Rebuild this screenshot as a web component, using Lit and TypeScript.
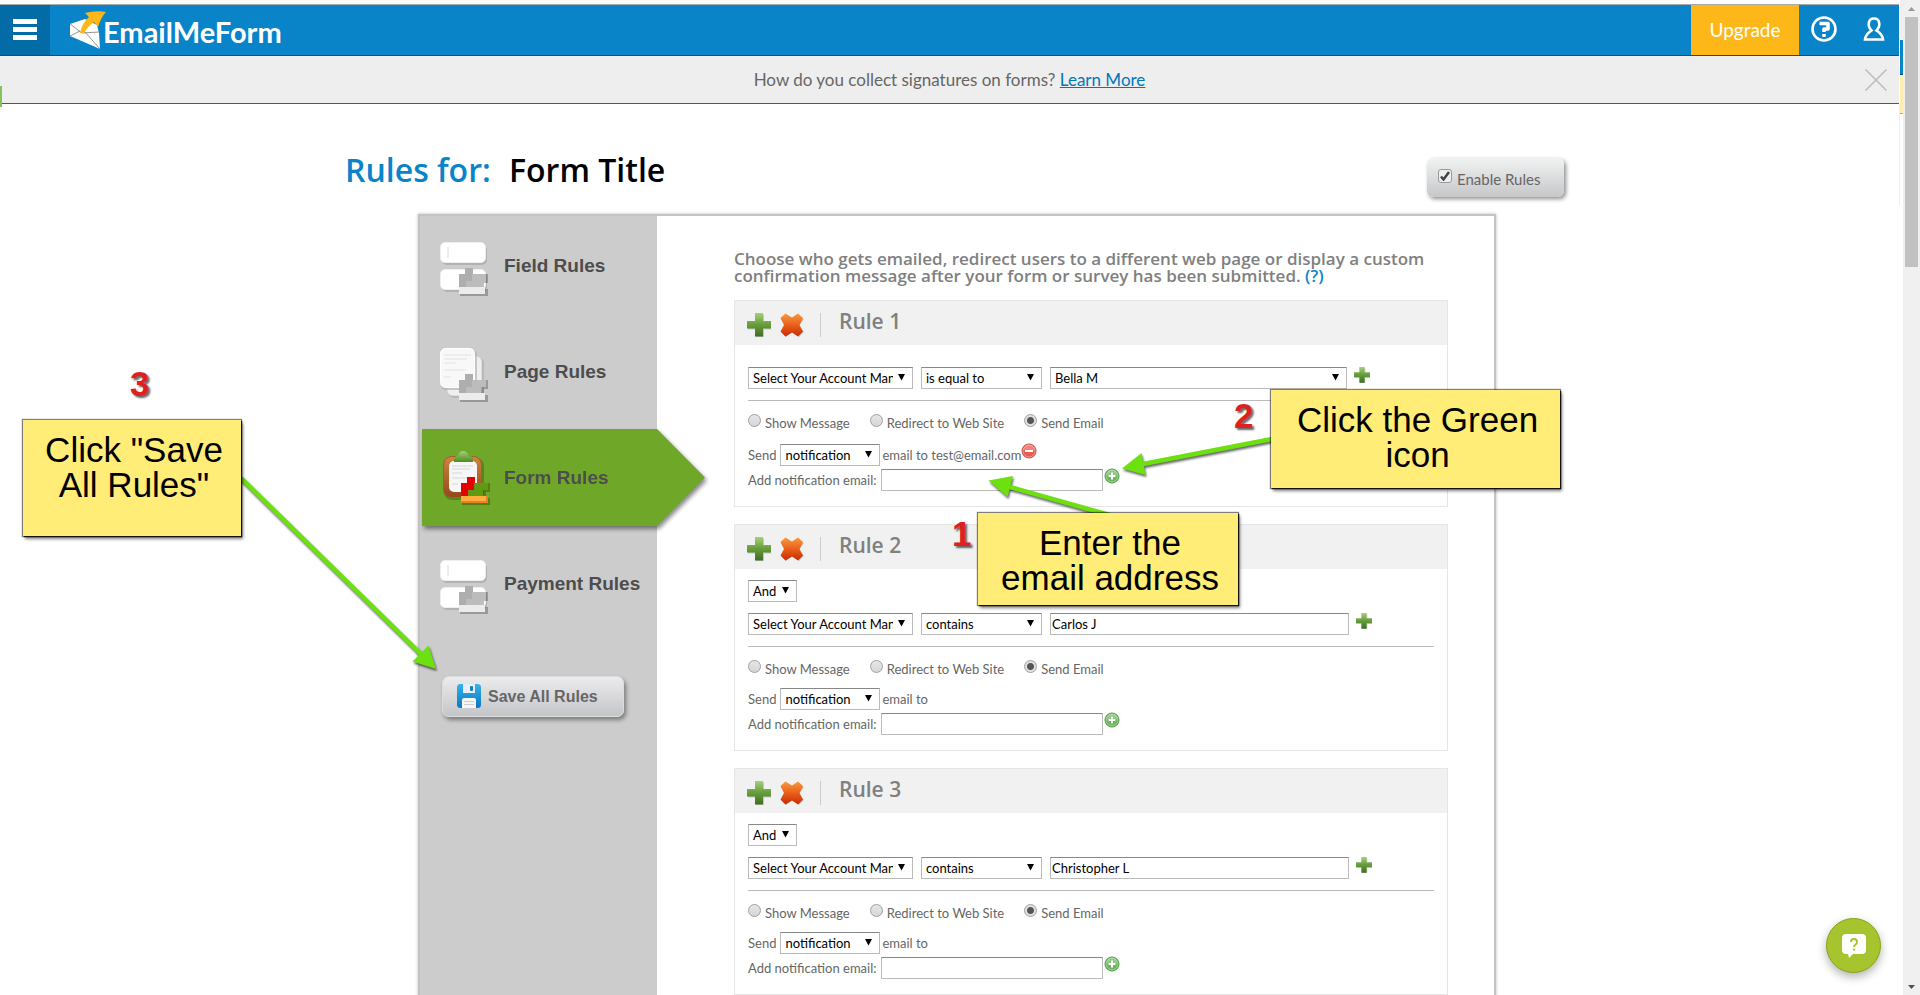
import { LitElement, html, css, svg, nothing } from "lit";
import { customElement, property } from "lit/decorators.js";

const plusShape = (size: number) => html`<svg width=${size} height=${size} viewBox="0 0 24 24" aria-hidden="true">
  <defs><linearGradient id="plusFill" x1="0" y1="0" x2="0" y2="1">
    <stop offset="0" stop-color="#a6cf7e"/><stop offset=".45" stop-color="#6ba23e"/><stop offset="1" stop-color="#3f6d25"/>
  </linearGradient></defs>
  <path d="M9 1.500h8v8h8v7h-8v8h-8v-8h-8v-7h8z" fill="#000" opacity=".18"/>
  <path d="M8 0h8v8h8v7.500h-8v8h-8v-8h-8v-7.500h8z" fill="url(#plusFill)"/>
</svg>`;

const crossShape = html`<svg width="24" height="24" viewBox="0 0 24 24" aria-hidden="true">
  <defs><linearGradient id="crossFill" x1="0" y1="0" x2="0" y2="1">
    <stop offset="0" stop-color="#f79a3c"/><stop offset=".5" stop-color="#e8601c"/><stop offset="1" stop-color="#c92a00"/>
  </linearGradient></defs>
  <path d="M6 1.500l7 5 6-5 5 5-5 6.500 5 6-5 5-6-5-7 5-5-5 5-6-5-6.500z" fill="#000" opacity=".18"/>
  <path d="M5.500.500L12 4.500 18 .500 23 5 19.500 12 23 18.500 18 23.500 12 19.500 5.500 23.500.500 18.500 4 12 .500 5z" fill="url(#crossFill)"/>
</svg>`;

const roundBadge = (add: boolean) => html`<svg width="16" height="16" viewBox="0 0 16 16" aria-hidden="true">
  <circle cx="8" cy="8" r="7" fill=${add ? "#6cb85c" : "#e85b52"} stroke=${add ? "#4b9446" : "#c24a44"}/>
  <path d="M2.500 7a5.500 5.500 0 0 1 11 0q-5.500 2-11 0z" fill="#fff" opacity=".25"/>
  <circle cx="8" cy="8" r="6" fill="none" stroke="#fff" stroke-opacity=".35"/>
  <path d=${add ? "M7 4.500h2V7h2.500v2H9v2.500H7V9H4.500V7H7z" : "M4 7h8v2H4z"} fill="#fff"/>
</svg>`;

const blocks = (a: string, b: string, base: string) => svg`
  <path d="M20 47h28v7H20z" fill="#000" opacity=".25"/>
  <path d="M19 32h6v-6h8v14h-7v6h-7z" fill=${a}/>
  <path d="M32 32h14v7h-5v7H26v-7h6z" fill=${b}/>
  <path d="M41 39h5v-7h2v9h-4v5h-3z" fill="#000" opacity=".25"/>
  <path d="M19 45h26v7H19z" fill=${base}/>`;

const fieldIcon = html`<svg width="50" height="56" viewBox="0 0 50 56" aria-hidden="true">
  <g fill="#999" opacity=".5"><rect x="2" y="3" width="45" height="20" rx="5"/><rect x="2" y="30" width="45" height="20" rx="5"/></g>
  <rect x="0.500" y=".500" width="45" height="20" rx="4.500" fill="#fff" stroke="#eee"/>
  <path d="M8 5v11" stroke="#ececec" stroke-width="2"/>
  <rect x=".500" y="27.500" width="45" height="20" rx="4.500" fill="#fff" stroke="#eee"/>
  ${blocks("#aeaeae", "#bcbcbc", "#ececec")}
</svg>`;

const pageIcon = html`<svg width="50" height="56" viewBox="0 0 50 56" aria-hidden="true">
  <rect x="9" y="10" width="35" height="40" rx="5" fill="#aaa" opacity=".6"/>
  <rect x="7.500" y="8.500" width="34" height="39" rx="5" fill="#efefef" stroke="#ddd"/>
  <rect x="1" y="2" width="36" height="40" rx="5" fill="#aaa" opacity=".6"/>
  <rect x=".500" y=".500" width="34" height="39" rx="5" fill="#f8f8f8" stroke="#fff"/>
  <path d="M4 7h27M4 11h23M4 15h12M4 22h22M4 29h7" stroke="#e2e2e2"/>
  ${blocks("#aeaeae", "#bcbcbc", "#ececec")}
</svg>`;

const formIcon = html`<svg width="50" height="56" viewBox="0 0 50 56" aria-hidden="true">
  <defs><linearGradient id="wood" x1="0" y1="0" x2="0" y2="1"><stop offset="0" stop-color="#cf8440"/><stop offset="1" stop-color="#93481b"/></linearGradient>
  <linearGradient id="clip" x1="0" y1="0" x2="0" y2="1"><stop offset="0" stop-color="#a5cf78"/><stop offset="1" stop-color="#4d8c1e"/></linearGradient></defs>
  <rect x="4" y="7" width="40" height="42" rx="8" fill="#3e6614" opacity=".5"/>
  <rect x="3.500" y="5.500" width="38" height="41" rx="8" fill="url(#wood)" stroke="#a65d28"/>
  <rect x="9" y="10" width="28" height="31" rx="5" fill="#f6f6f6"/>
  <path d="M12 15h21M12 18h18M12 22h10M12 27h19M12 33h6" stroke="#d6d6d6"/>
  <path d="M14 11V8q0-3 4-3 1-5 5-5t6 5q4 0 4 4v2z" fill="url(#clip)"/>
  <g transform="translate(2 0)">${blocks("#e60000", "#5f9a12", "#fdae3c")}<path d="M19 51h26M45 45v7" stroke="#ef7d22" stroke-width="2" fill="none"/></g>
</svg>`;

const NAV = [
  { label: "Field Rules", icon: fieldIcon },
  { label: "Page Rules", icon: pageIcon },
  { label: "Form Rules", icon: formIcon },
  { label: "Payment Rules", icon: fieldIcon },
];

interface Rule { title: string; join?: string; op: string; value: string; recipient?: string; }

const RULES: Rule[] = [
  { title: "Rule 1", op: "is equal to", value: "Bella M", recipient: "test@email.com" },
  { title: "Rule 2", join: "And", op: "contains", value: "Carlos J" },
  { title: "Rule 3", join: "And", op: "contains", value: "Christopher L" },
];

const controls = css`
  * { box-sizing: border-box; }
  button { border: 0; padding: 0; background: none; font: inherit; color: inherit; cursor: pointer; }
  svg { display: block; flex: none; }
`;

@customElement("rule-card")
class RuleCard extends LitElement {
  @property({ attribute: false }) rule!: Rule;

  static styles = [controls, css`
    :host { display: block; border: 1px solid #e5e5e5; background: #fff; font: 13px/16px Lato, sans-serif; color: #666; }
    .head { display: flex; align-items: center; height: 44px; padding: 4px 12px 0; background: #f1f1f1; }
    .head button + button { margin-left: 9px; }
    h2 { margin: 0 0 0 16px; padding-left: 18px; border-left: 1px solid #ccc; font: 600 21px/24px "Open Sans", sans-serif; color: #808080; }
    h2 span { display: block; margin-top: -4px; padding-bottom: 4px; }
    .body { padding: 11px 13px 15px; }
    .body.single { padding-top: 22px; }
    .row { display: flex; align-items: center; }
    .join { margin-bottom: 11px; }
    .cond { gap: 8px; padding-bottom: 11px; border-bottom: 1px solid #bbb; }
    .cond button { align-self: flex-start; margin-left: -1px; }
    .pick { position: relative; display: block; }
    .pick svg { position: absolute; right: 8px; top: 7px; pointer-events: none; }
    select, .text { display: block; width: 100%; height: 22px; margin: 0; border: 1px solid #bbb; border-top-color: #888; border-radius: 0; background: #fff; appearance: none; font: 13px/18px Lato, sans-serif; color: #000; outline: 0; }
    select { padding: 0 19px 0 4px; text-overflow: clip; }
    .text { padding: 0 1px; }
    .and { width: 49px; }
    .field { width: 165px; }
    .op { width: 121px; }
    .value { width: 297px; }
    .value.free { width: 299px; }
    .kind { width: 100px; }
    .radios { padding: 11px 0; gap: 20px; }
    .radios label { display: flex; gap: 4px; }
    .radios input { appearance: none; width: 13px; height: 13px; margin: 2px 0 0; border: 1px solid #a0a0a0; border-radius: 50%; background: linear-gradient(#e6e6e6, #d6d6d6); }
    .radios input:checked { background: radial-gradient(circle, #555 0 3px, #e0e0e0 4px); }
    .radios span { margin-top: 3px; }
    .send { gap: 4px; height: 22px; margin-bottom: 3px; }
    .send .to { margin-left: -2px; display: flex; height: 16px; }
    .send .to button { align-self: flex-start; margin-top: -4px; }
    .single .send { margin-top: 2px; }
    .add { gap: 4px; height: 22px; }
    .add .text { width: 222px; }
    .add button { margin: -8px 0 0 -3px; }
  `];

  private pick(cls: string, name: string, text: string) {
    return html`<span class="pick ${cls}"><select aria-label=${name}><option>${text}</option></select>
      <svg width="7" height="7" viewBox="0 0 7 7" aria-hidden="true"><path d="M0 0h7L3.500 6.500z" fill="#000"/></svg></span>`;
  }

  render() {
    const r = this.rule;
    return html`
      <div class="head">
        <button aria-label="Add rule">${plusShape(24)}</button>
        <button aria-label="Delete rule">${crossShape}</button>
        <h2><span>${r.title}</span></h2>
      </div>
      <div class="body ${r.join ? "" : "single"}">
        ${r.join ? html`<div class="row join">${this.pick("and", "Join", r.join)}</div>` : nothing}
        <div class="row cond">
          ${this.pick("field", "Field", "Select Your Account Manager")}
          ${this.pick("op", "Operator", r.op)}
          ${r.join
            ? html`<span class="value free"><input class="text" type="text" aria-label="Value" .value=${r.value}></span>`
            : this.pick("value", "Value", r.value)}
          <button aria-label="Add condition">${plusShape(16)}</button>
        </div>
        <div class="row radios">
          ${["Show Message", "Redirect to Web Site", "Send Email"].map((t, i) => html`
            <label><input type="radio" name="action" ?checked=${i === 2}><span>${t}</span></label>`)}
        </div>
        <div class="row send">
          <span>Send</span>${this.pick("kind", "Email kind", "notification")}
          <span class="to">email to ${r.recipient ?? ""}${r.recipient ? html`<button aria-label="Remove recipient">${roundBadge(false)}</button>` : nothing}</span>
        </div>
        <div class="row add">
          <label for="mail">Add notification email:</label>
          <input class="text" id="mail" type="text">
          <button aria-label="Add email">${roundBadge(true)}</button>
        </div>
      </div>`;
  }
}

@customElement("app-root")
class AppRoot extends LitElement {
  static styles = [controls, css`
    :host { display: flex; position: relative; height: 100vh; overflow: hidden; background: #fff; font: 16px/20px Lato, sans-serif; color: #666; }
    .page { flex: 1; min-width: 0; }
    .top { padding-top: 4px; margin-right: 4px; }
    .bar { display: flex; align-items: stretch; height: 52px; border-top: 1px solid #aaa; border-bottom: 1px solid #0b4f80; background: #0984c9; color: #fff; }
    .menu { width: 50px; background: #036ba5; display: grid; place-items: center; padding-bottom: 2px; }
    .logo { display: flex; align-items: center; margin-left: 19px; color: #fff; text-decoration: none; font-size: 29px; font-weight: 700; line-height: 34px; }
    .logo svg { margin-right: -4px; }
    .logo span { padding-top: 3px; }
    .spacer { flex: 1; }
    .upgrade { width: 108px; background: #fdb718; font-size: 19px; }
    .tool { width: 50px; display: grid; place-items: center; padding-bottom: 2px; }
    .banner { display: flex; align-items: center; height: 48px; background: #eee; border-bottom: 1px solid #555; font-size: 17px; }
    .banner p { flex: 1; margin: 0; padding-left: 34px; text-align: center; color: #666; }
    .banner a { color: #0077be; }
    .close { margin-right: 12px; }
    .main { width: 1227px; max-width: 100%; margin: 0 auto; }
    .title { display: flex; justify-content: space-between; align-items: flex-start; padding: 44px 1px 0 7px; height: 110px; }
    h1 { margin: 0; font: 600 32px/44px "Open Sans", sans-serif; color: #000; }
    h1 em { font-style: normal; color: #0984c9; margin-right: 10px; }
    .enable { display: flex; align-items: center; gap: 5px; width: 137px; height: 39px; margin-top: 10px; padding-left: 11px; border-radius: 6px; background: linear-gradient(#f1f2f2, #c6c7c9); box-shadow: 2px 2px 4px rgba(0,0,0,.45); font-size: 15px; }
    .enable span { padding-top: 3px; }
    .enable .check { position: relative; height: 14px; margin-top: -4px; padding: 0; }
    .enable input { display: block; appearance: none; width: 14px; height: 14px; margin: 0; border: 1px solid #999; border-radius: 3px; background: #eee; }
    .check svg { position: absolute; left: 2px; top: 2px; pointer-events: none; }
    .panel { display: flex; margin: 0 69px 0 80px; min-height: 100vh; border: 2px solid #c3c3c3; box-shadow: 0 0 3px #bbb; }
    nav { width: 237px; flex: none; background: #ccc; display: flex; flex-direction: column; gap: 9px; padding-top: 1px; }
    nav a { display: flex; align-items: center; gap: 14px; height: 97px; padding-left: 18px; margin-left: 2px; text-decoration: none; color: #4d4d4d; font: 700 19px/24px "Liberation Sans", Arial, sans-serif; }
    nav a svg { margin-top: 8px; }
    .on { filter: drop-shadow(2px 3px 2px rgba(0,0,0,.45)); }
    .on a { width: 283px; background: #6fa728; clip-path: polygon(0 0, 235px 0, 100% 50%, 235px 100%, 0 100%); }
    .on a svg { margin-top: 3px; }
    .save { display: flex; align-items: center; gap: 6px; width: 182px; height: 41px; margin: 35px 0 0 22px; padding-left: 14px; border-radius: 7px; border: 1px solid #ddd; background: linear-gradient(#ececee, #c4c5c8); box-shadow: 2px 3px 4px rgba(0,0,0,.4); font: 700 16px/20px "Liberation Sans", Arial, sans-serif; color: #666; }
    .content { flex: 1; min-width: 0; padding: 34px 46px 0 77px; }
    .intro { margin: 0 0 16px; font: 600 17px/17px "Open Sans", sans-serif; color: #808080; }
    .intro a { color: #0984c9; text-decoration: none; }
    rule-card { margin-bottom: 17px; }
    .scroll { width: 17px; flex: none; display: flex; flex-direction: column; align-items: center; justify-content: space-between; background: #f0f0f0; padding: 7px 0 6px; }
    .thumb { width: 13px; height: 250px; background: #c1c1c1; margin-top: 6px; }
    .grow { flex: 1; }
    .edge { position: absolute; top: 0; right: 17px; width: 3px; }
    .edge i { display: block; }
    .e1 { height: 39px; background: #f0f0f0; }
    .e2 { height: 36px; background: #0984c9; border-top: 1px solid #fff; border-bottom: 1px solid #0b4f80; }
    .e3 { height: 39px; background: #ffeeb0; border-bottom: 1px solid #aaa; }
    .rule { position: absolute; top: 104px; right: 20px; width: 1px; height: 101px; background: #eee; }
    .tab { position: absolute; left: 0; top: 86px; width: 2px; height: 21px; background: #84c25c; }
    .arrows { position: absolute; left: 0; top: 0; filter: drop-shadow(1px 2px 1px rgba(0,0,0,.6)); pointer-events: none; }
    .note { position: absolute; padding: 12px 0 0 4px; background: #ffed78; box-shadow: 0 0 1px 1px rgba(0,0,0,.5), 1px 1px 1px #222, 2px 3px 3px rgba(0,0,0,.5); font: 35px/35px "Liberation Sans", Arial, sans-serif; color: #000; text-align: center; }
    .num { position: absolute; font: 700 35px/35px "Liberation Sans", Arial, sans-serif; color: #e02020; text-shadow: 2px 2px 2px rgba(0,0,0,.6); }
    .n1 { left: 978px; top: 513px; width: 260px; height: 92px; }
    .n2 { left: 1271px; top: 390px; width: 289px; height: 98px; }
    .n3 { left: 23px; top: 420px; width: 218px; height: 116px; }
    .d1 { left: 952px; top: 516px; }
    .d2 { left: 1234px; top: 398px; }
    .d3 { left: 130px; top: 366px; }
    .chat { position: absolute; right: 39px; bottom: 22px; width: 55px; height: 55px; border: 1px solid #86a516; border-radius: 50%; background: #a5c42e; box-shadow: 0 4px 10px rgba(0,0,0,.3); display: grid; place-items: center; }
  `];

  render() {
    return html`
      <div class="page">
        <header class="top">
          <div class="bar">
            <button class="menu" aria-label="Menu"><svg width="24" height="21" viewBox="0 0 24 21"><path d="M0 0h24v5H0zM0 8h24v5H0zM0 16h24v5H0z" fill="#fff"/></svg></button>
            <a class="logo" href="#">
              <svg width="38" height="40" viewBox="0 0 38 40" aria-hidden="true">
                <path d="M1 14L16 9l12 6 2 8 1 16L1 26z" fill="#fff"/>
                <path d="M1 14l12 9 17-1M1 26l10-5M16 22l15 17" fill="none" stroke="#777" stroke-width=".8"/>
                <path d="M11 23Q13 13 20 7l-4-4Q27 0 37 2q-5 5-8 15l-4-5q-6 4-10 11z" fill="#fdb718"/>
              </svg><span>EmailMeForm</span></a>
            <div class="spacer"></div>
            <button class="upgrade">Upgrade</button>
            <button class="tool" aria-label="Help"><svg width="26" height="26" viewBox="0 0 26 26"><circle cx="13" cy="13" r="11.500" fill="none" stroke="#fff" stroke-width="2.600"/><path d="M8.500 7.500h8.500v5.500h-4v3" fill="none" stroke="#fff" stroke-width="3.600" stroke-linejoin="round"/><path d="M11.200 18h3.600v3h-3.600z" fill="#fff"/></svg></button>
            <button class="tool" aria-label="Account"><svg width="22" height="26" viewBox="0 0 22 26"><path d="M8.500 14.500C4 10 5 2.500 11 2.500s7 7.500 2.500 12c3 2 6 3.500 6.500 9H2c.500-5.500 3.500-7 6.500-9z" fill="none" stroke="#fff" stroke-width="2.600"/></svg></button>
          </div>
          <div class="banner">
            <p>How do you collect signatures on forms? <a href="#">Learn More</a></p>
            <button class="close" aria-label="Close"><svg width="22" height="22" viewBox="0 0 22 22"><path d="M.500.500l21 21M21.500.500l-21 21" stroke="#bbb" stroke-width="1.500"/></svg></button>
          </div>
        </header>
        <main class="main">
          <div class="title">
            <h1><em>Rules for:</em> Form Title</h1>
            <label class="enable"><span class="check"><input type="checkbox" checked><svg width="10" height="10" viewBox="0 0 10 10"><path d="M1 5.500l2.500 3L9 1" fill="none" stroke="#444" stroke-width="2.500"/></svg></span><span>Enable Rules</span></label>
          </div>
          <div class="panel">
            <nav>
              ${NAV.map((n, i) => html`<div class=${i === 2 ? "on" : "off"}><a href="#">${n.icon}<span>${n.label}</span></a></div>`)}
              <button class="save"><svg width="25" height="25" viewBox="0 0 25 25"><defs><linearGradient id="disk" x1="0" y1="0" x2="0" y2="1"><stop offset="0" stop-color="#35b4e8"/><stop offset="1" stop-color="#0878c4"/></linearGradient></defs><rect width="24" height="24" rx="3.500" fill="url(#disk)"/><path d="M6 0h12v9H6z" fill="#e9eef2"/><rect x="13" y="2" width="3" height="5" rx="1" fill="#1580bb"/><path d="M5 24v-8q0-2 2-2h10q2 0 2 2v8z" fill="#f6f6f6"/><path d="M7 17.500h10M7 20.500h10" stroke="#ccc"/></svg>Save All Rules</button>
            </nav>
            <div class="content">
              <p class="intro">Choose who gets emailed, redirect users to a different web page or display a custom confirmation message after your form or survey has been submitted. <a href="#">(?)</a></p>
              ${RULES.map((r) => html`<rule-card .rule=${r}></rule-card>`)}
            </div>
          </div>
        </main>
      </div>
      <div class="scroll" aria-hidden="true">
        <svg width="7" height="4" viewBox="0 0 7 4"><path d="M0 4h7L3.500 0z" fill="#999"/></svg>
        <div class="thumb"></div><div class="grow"></div>
        <svg width="7" height="4" viewBox="0 0 7 4"><path d="M0 0h7L3.500 4z" fill="#505050"/></svg>
      </div>
      <div class="edge"><i class="e1"></i><i class="e2"></i><i class="e3"></i></div>
      <div class="rule"></div><div class="tab"></div>
      <svg class="arrows" width="1300" height="700" viewBox="0 0 1300 700" aria-hidden="true">
        <g stroke="#6de010" stroke-width="4.500"><path d="M241 478L422 655M1113 516L1010 487M1272 439L1143 464"/></g>
        <path d="M436 669l-7.500-23.500-16 16zM988.500 480.500l24.500-4.500-5.500 21zM1122 468.500l19.500-15.500 4 22z" fill="#6de010"/>
      </svg>
      <div class="note n1">Enter the<br>email address</div>
      <div class="note n2">Click the Green<br>icon</div>
      <div class="note n3">Click "Save<br>All Rules"</div>
      <div class="num d1">1</div><div class="num d2">2</div><div class="num d3">3</div>
      <button class="chat" aria-label="Chat"><svg width="24" height="24" viewBox="0 0 24 24"><path d="M4 0h16q4 0 4 4v12q0 4-4 4H11l-4 4-1-4H4q-4 0-4-4V4q0-4 4-4z" fill="#fff"/><path d="M9 8q0-3 3-3t3 3q0 1.500-1.500 2.500T12 13" fill="none" stroke="#a5c42e" stroke-width="2"/><path d="M11 14.500h2v2h-2z" fill="#a5c42e"/></svg></button>
    `;
  }
}
